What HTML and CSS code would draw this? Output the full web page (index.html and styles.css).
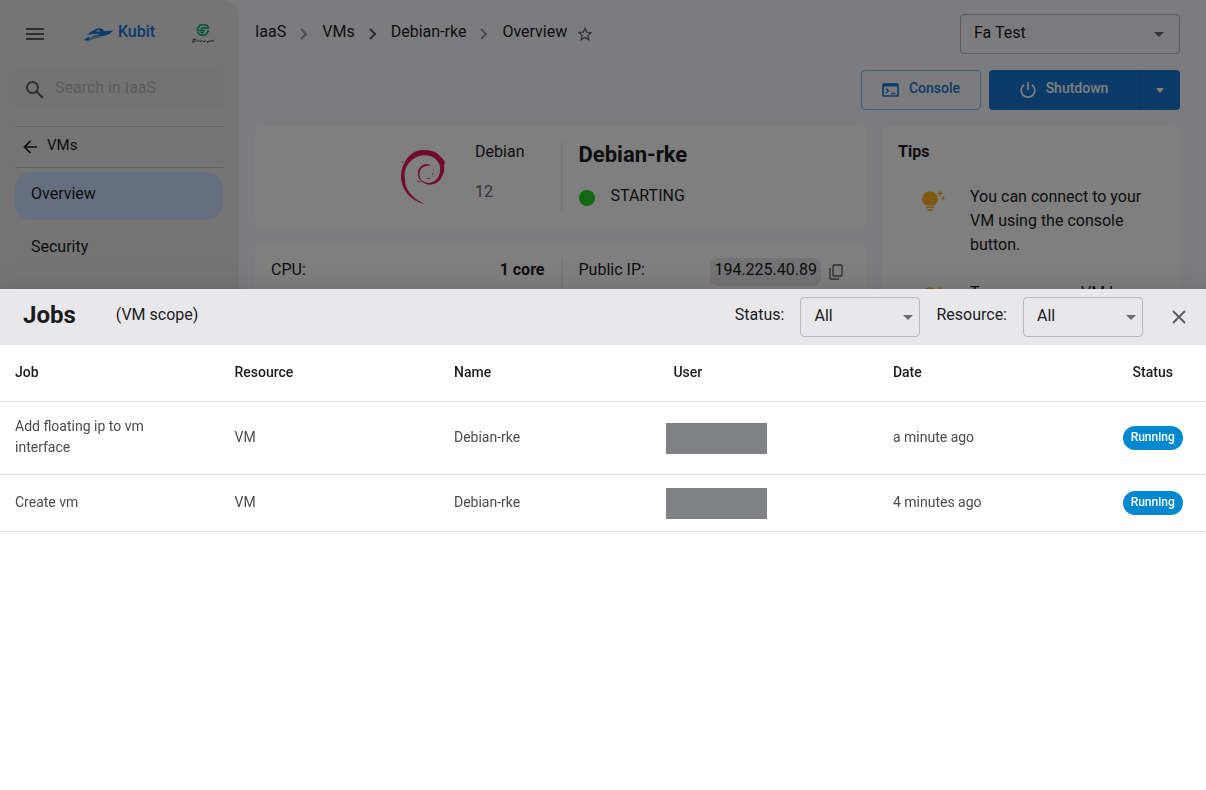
FILE: index.html
```html
<!DOCTYPE html>
<html lang="en">
<head>
<meta charset="utf-8">
<title>Kubit – Jobs</title>
<link rel="stylesheet" href="styles.css">
</head>
<body>
<div class="app">
  <aside class="sidebar">
    <header class="brand">
      <button class="icon-button" aria-label="Menu"><svg width="18" height="12" viewBox="0 0 18 12"><path fill="currentColor" d="M0 0h18v2H0zM0 5h18v2H0zM0 10h18v2H0z"/></svg></button>
      <a class="brand-link" href="#">
        <svg width="29" height="14" viewBox="0 0 29 14" fill="#1976d2"><path d="M3 8Q7 4 11 2.500Q14 .5 18 1.500L20 4Q24 4 29 3.500Q26 8 19 9Q11 9.500 5 11Q10 8 17 7Q12 6 3 8Z"/><path d="M0 13Q2 10.500 6 9.500Q4 11 5 12Q11 9.500 19 10.500Q10 10.500 6 13Q3 14 0 13Z"/><path d="M12 4.500L14 2.800L17 4.500Z" fill="#ebebed"/></svg>
        <span>Kubit</span>
      </a>
      <svg class="partner" width="22" height="20" viewBox="0 0 22 20" fill="none"><path d="M16.500 4.500L15.500 1.800Q15 1 14 1H8.500Q7.500 1 7 2L5.300 5Q5 6.500 6.500 6.500H13M17 4H10.500Q9.500 4 9 5M6 8L7 10.200Q7.500 11 8.500 11H13Q14 11 14.500 10L16.500 6.500M8.500 8.500H12" stroke="#00a37a" stroke-width="1.600"/><path d="M1 19V15.500Q4 14 4 16T2 17.500M5 17.500L7 16.500L8 17.500L10 16.500L11 17.500L14 17M15 19L16 17L18 17.500L20 16.500L22 17.500" stroke="#333" stroke-width=".9"/></svg>
    </header>
    <label class="search">
      <svg width="18" height="18" viewBox="0 0 18 18"><circle cx="6.500" cy="6.500" r="5.500" fill="none" stroke="currentColor" stroke-width="2"/><path d="M10.500 10.500L17 17" stroke="currentColor" stroke-width="2.200"/></svg>
      <input type="search" placeholder="Search in IaaS" aria-label="Search in IaaS">
    </label>
    <a class="back" href="#"><svg width="14" height="14" viewBox="0 0 14 14"><path d="M14 7H1.500M7.500 1L1.500 7l6 6" fill="none" stroke="currentColor" stroke-width="1.700"/></svg><span>VMs</span></a>
    <nav class="menu">
      <a class="menu-item active" href="#">Overview</a>
      <a class="menu-item" href="#">Security</a>
    </nav>
  </aside>

  <main class="main">
    <div class="topbar">
      <nav class="crumbs">
        <a href="#">IaaS</a><svg class="chevron" width="8" height="12" viewBox="0 0 8 12"><path d="M1 1l5 5-5 5"/></svg>
        <a href="#">VMs</a><svg class="chevron strong" width="8" height="12" viewBox="0 0 8 12"><path d="M1 1l5 5-5 5"/></svg>
        <a href="#">Debian-rke</a><svg class="chevron" width="8" height="12" viewBox="0 0 8 12"><path d="M1 1l5 5-5 5"/></svg>
        <span class="current">Overview <button class="icon-button" aria-label="Add to favourites"><svg width="14" height="14" viewBox="0 0 14 14"><path d="M7 1.300l1.700 3.800 4.300.4-3.200 2.900 1 4.300L7 10.400l-3.800 2.300 1-4.300L1 5.500l4.300-.4z" fill="none" stroke="currentColor" stroke-width="1.200"/></svg></button></span>
      </nav>
      <div class="select project">
        <select aria-label="Project"><option>Fa Test</option></select>
        <svg class="caret" width="10" height="5" viewBox="0 0 10 5"><path fill="currentColor" d="M0 0h10L5 5z"/></svg>
      </div>
    </div>

    <div class="actions">
      <button class="button outlined"><svg width="18" height="14" viewBox="0 0 18 14" fill="none" stroke="currentColor"><rect x="1" y="1" width="15" height="12" rx="1" stroke-width="1.700"/><path d="M1 2h15" stroke-width="3"/><path d="M4 5.500l2.500 2.300L4 10M9 10.500h4.500" stroke-width="1.400"/></svg><span>Console</span></button>
      <div class="split">
        <button class="button filled"><svg width="16" height="16" viewBox="0 0 16 16" fill="none" stroke="currentColor" stroke-width="1.700"><path d="M8 0v8M4.200 2.700a6.800 6.800 0 1 0 7.600 0"/></svg><span>Shutdown</span></button>
        <button class="button filled more" aria-label="More actions"><svg width="8" height="5" viewBox="0 0 8 5"><path fill="currentColor" d="M0 0h8L4 5z"/></svg></button>
      </div>
    </div>

    <div class="content">
      <div class="column">
        <section class="card halves summary">
          <div class="half os">
            <svg width="44" height="56" viewBox="0 0 44 56"><path fill="#e5195f" d="M24 54.500C8 50 0 39 0 26C1 10 11 0 22 0C29 0 33 1 37 4L41 8L44 12L43 16C44 21 42 26 39 30C34 36 25 36 20 31C15 26 16 18 22 15Q26 13 30 15.500Q23 15 20 19C16 26 20 33 28 33C36 32 40 25 39 17C37 8 29 4.500 21 5.500C11 7 4.500 15 3.500 24L4 30C4 38 9 47 24 54.500Z"/><path d="M16 31l3 1M32 20l1 1M31 25l1-2M26 28.500h3M1 13l1-2" stroke="#e5195f" stroke-width=".8"/></svg>
            <div class="os-text"><span>Debian</span><span class="muted">12</span></div>
          </div>
          <div class="half identity">
            <h1>Debian-rke</h1>
            <p class="state"><span class="dot"></span><span class="state-text">STARTING</span></p>
          </div>
        </section>
        <section class="card halves specs">
          <div class="half pair"><span>CPU:</span><strong>1 core</strong></div>
          <div class="half pair"><span>Public IP:</span>
            <span class="ip"><code>194.225.40.89</code><button class="icon-button" aria-label="Copy IP"><svg width="14" height="16" viewBox="0 0 14 16" fill="none" stroke="currentColor" stroke-width="1.300"><rect x="4" y="1" width="9" height="11" rx="1"/><path d="M1 4v10q0 1 1 1h8"/></svg></button></span>
          </div>
        </section>
      </div>
      <section class="card tips">
        <h2>Tips</h2>
        <ul>
          <li><svg width="24" height="22" viewBox="0 0 24 22" fill="#fbb520"><path d="M8 1.500a7.500 7.500 0 0 1 4 14H4a7.500 7.500 0 0 1 4-14zM4 16.500h8V18H4zM5 19h6l-1 2H6zM18 0l1 2.500 2.500 1L19 4.500 18 7l-1-2.500-2.500-1 2.500-1zM21 6l.8 1.500 1.500.8-1.500.7-.8 1.500-.7-1.500-1.500-.7 1.500-.8z"/></svg><p>You can connect to your VM using the console button.</p></li>
          <li><svg width="24" height="22" viewBox="0 0 24 22" fill="#fbb520"><path d="M8 1.500a7.500 7.500 0 0 1 4 14H4a7.500 7.500 0 0 1 4-14zM4 16.500h8V18H4zM5 19h6l-1 2H6zM18 0l1 2.500 2.500 1L19 4.500 18 7l-1-2.500-2.500-1 2.500-1z"/></svg><p>To access your VM by</p></li>
        </ul>
      </section>
    </div>
  </main>
</div>

<div class="backdrop"></div>
<section class="drawer" aria-label="Jobs">
  <header class="drawer-head">
    <h2>Jobs</h2>
    <span class="scope">(VM scope)</span>
    <div class="filters">
      <label for="status">Status:</label>
      <div class="select filter"><select id="status"><option>All</option></select><svg class="caret" width="10" height="5" viewBox="0 0 10 5"><path fill="currentColor" d="M0 0h10L5 5z"/></svg></div>
      <label for="resource">Resource:</label>
      <div class="select filter"><select id="resource"><option>All</option></select><svg class="caret" width="10" height="5" viewBox="0 0 10 5"><path fill="currentColor" d="M0 0h10L5 5z"/></svg></div>
    </div>
    <button class="icon-button" aria-label="Close"><svg width="14" height="14" viewBox="0 0 14 14"><path d="M1 1l12 12M13 1L1 13" stroke="currentColor" stroke-width="1.900"/></svg></button>
  </header>
  <table class="jobs">
    <thead><tr><th>Job</th><th>Resource</th><th>Name</th><th>User</th><th>Date</th><th class="status">Status</th></tr></thead>
    <tbody>
      <tr><td>Add floating ip to vm interface</td><td>VM</td><td>Debian-rke</td><td class="user"><span class="redacted"></span></td><td>a minute ago</td><td class="status"><span class="chip">Running</span></td></tr>
      <tr><td>Create vm</td><td>VM</td><td>Debian-rke</td><td class="user"><span class="redacted"></span></td><td>4 minutes ago</td><td class="status"><span class="chip">Running</span></td></tr>
    </tbody>
  </table>
</section>
</body>
</html>
```
FILE: styles.css
```css
* { box-sizing: border-box; }
html, body { height: 100%; }
body {
  margin: 0;
  overflow: hidden;
  background: #f9f9fd;
  color: #1b1b1f;
  font: 400 16px/24px Roboto, "Liberation Sans", sans-serif;
}
a { color: inherit; text-decoration: none; }
h1, h2, p, ul { margin: 0; padding: 0; }
svg { display: block; flex: none; }
button, input, select { font: inherit; color: inherit; }
.icon-button { display: grid; place-items: center; padding: 0; border: 0; background: none; color: #5c5c60; }

.app { display: flex; height: 100%; }

.sidebar { flex: none; width: 239px; padding: 14px 16px 0 15px; border-top-right-radius: 16px; background: #ebebed; }
.brand { display: flex; align-items: center; justify-content: space-between; height: 40px; padding: 0 9px 0 11px; }
.brand-link { display: flex; align-items: center; gap: 5px; padding-left: 3px; color: #1976d2; font-weight: 500; }
.brand-link span { padding-bottom: 4px; }
.search { display: flex; align-items: center; gap: 11px; height: 40px; margin: 16px 0; padding: 0 11px; border-radius: 4px; background: #e6e6e6; color: #606064; }
.search input { width: 100%; min-width: 0; padding: 0 0 4px; border: 0; outline: 0; background: none; }
.search input::placeholder { color: #bbbbbe; opacity: 1; }
.back { display: flex; align-items: center; gap: 10px; height: 42px; padding: 0 8px; border-top: 1px solid #c8c8cc; border-bottom: 1px solid #c8c8cc; font-size: 15px; }
.back span { padding-bottom: 4px; }
.menu { display: grid; gap: 5px; padding-top: 4px; }
.menu-item { height: 48px; padding: 10px 16px; border-radius: 16px; }
.menu-item.active { background: #cbdffe; }

.main { flex: 1; min-width: 0; padding: 14px 26px 0 16px; }
.topbar { display: flex; justify-content: space-between; }
.crumbs { display: flex; align-items: center; gap: 14px; height: 40px; }
.crumbs a, .current { padding-bottom: 4px; }
.current { display: flex; align-items: center; gap: 11px; }
.current .icon-button { padding-top: 3px; }
.chevron { fill: none; stroke: #99999c; stroke-width: 2; }
.chevron.strong { stroke: #55555a; }

.select { position: relative; }
.select select { appearance: none; display: block; width: 100%; height: 40px; padding: 0 32px 3px 13px; border: 1px solid #b9b9bd; border-radius: 4px; outline: 0; background: none; }
.caret { position: absolute; right: 16px; top: 18px; color: #6b6b6f; pointer-events: none; }
.project { width: 220px; }

.actions { display: flex; justify-content: flex-end; gap: 8px; margin: 16px 0; }
.button { display: flex; align-items: center; justify-content: center; gap: 9px; height: 40px; padding: 0 20px; border: 0; border-radius: 4px; font-size: 14px; font-weight: 500; }
.button span { padding-bottom: 4px; }
.outlined { width: 120px; border: 1px solid #8cbae8; background: none; color: #1976d2; }
.split { display: flex; }
.filled { width: 150px; gap: 10px; border-radius: 4px 0 0 4px; background: #1976d2; color: #fff; }
.filled.more { width: 41px; padding: 0; border-left: 1px solid #1565c0; border-radius: 0 4px 4px 0; }

.content { display: grid; grid-template-columns: minmax(0, 1fr) 298px; gap: 16px; }
.column { display: grid; align-content: start; gap: 16px; }
.card { border-radius: 8px; background: #fff; }
.halves { display: grid; grid-template-columns: 1fr 1fr; padding: 16px 0; }
.half { padding: 0 16px; }
.half + .half { border-left: 2px solid #f0f0f3; }
.os { display: flex; gap: 30px; justify-content: flex-end; padding-right: 36px; }
.os > svg { margin-top: 8px; }
.os-text { display: grid; align-content: start; gap: 16px; margin-top: -2px; }
.muted { color: #6b6b6f; }
.summary { height: 102px; }
.summary h1 { padding-top: 1px; font-size: 22px; line-height: 24px; font-weight: 700; }
.state { display: flex; align-items: center; gap: 16px; margin-top: 17px; }
.state-text { padding-bottom: 3px; }
.dot { width: 16px; height: 16px; border-radius: 50%; background: #25d12b; }
.specs { min-height: 160px; padding-top: 14px; }
.pair { display: flex; justify-content: space-between; align-items: flex-start; }
.pair strong { font-weight: 700; }
.ip { display: flex; align-items: center; gap: 8px; padding-right: 7px; }
.ip code { padding: 0 4px 4px; border-radius: 8px; background: #e8e8ec; font: inherit; }
.tips { padding: 14px 16px; min-height: 400px; }
.tips h2 { font-size: 16px; font-weight: 700; }
.tips ul { display: grid; gap: 24px; padding: 21px 0 0 24px; list-style: none; }
.tips li { display: flex; gap: 24px; }
.tips li svg { margin-top: 5px; }

.backdrop { position: fixed; inset: 0; background: rgba(0, 0, 0, .5); }
.drawer { position: fixed; inset: auto 0 0; height: 501px; background: #fff; box-shadow: 0 8px 10px -5px rgba(0,0,0,.2), 0 16px 24px 2px rgba(0,0,0,.14), 0 6px 30px 5px rgba(0,0,0,.12); }
.drawer-head { display: flex; align-items: center; height: 56px; padding: 0 20px 0 23px; background: #e8e8eb; }
.drawer-head h2 { padding-bottom: 4px; font-size: 24px; font-weight: 700; }
.scope { margin-left: 40px; padding-bottom: 4px; }
.filters { display: flex; align-items: center; gap: 16px; margin: 0 29px 0 auto; }
.filters label { padding-bottom: 4px; }
.filter { width: 120px; }
.filter .caret { right: 7px; }

.jobs { width: 100%; table-layout: fixed; border-collapse: separate; border-spacing: 0; font-size: 14px; line-height: 21px; }
.jobs th, .jobs td { height: 57px; padding: 14px 48px 16px 15px; border-bottom: 1px solid #e1e1e3; text-align: left; vertical-align: middle; }
.jobs th { width: 18.2%; font-weight: 500; }
.jobs td { color: #4b4b4f; }
.jobs th.status { width: 9%; }
.jobs .status { padding-left: 2px; padding-right: 0; text-align: center; }
.jobs td.user, .jobs td.status { padding-top: 0; padding-bottom: 0; }
.jobs td.user { padding-left: 8px; }
.redacted { display: block; width: 101px; height: 31px; background: #818286; }
.chip { display: inline-block; height: 24px; padding: 0 8px; border-radius: 12px; background: #0288d1; color: #fff; font-size: 12px; line-height: 22px; font-weight: 500; }
```
